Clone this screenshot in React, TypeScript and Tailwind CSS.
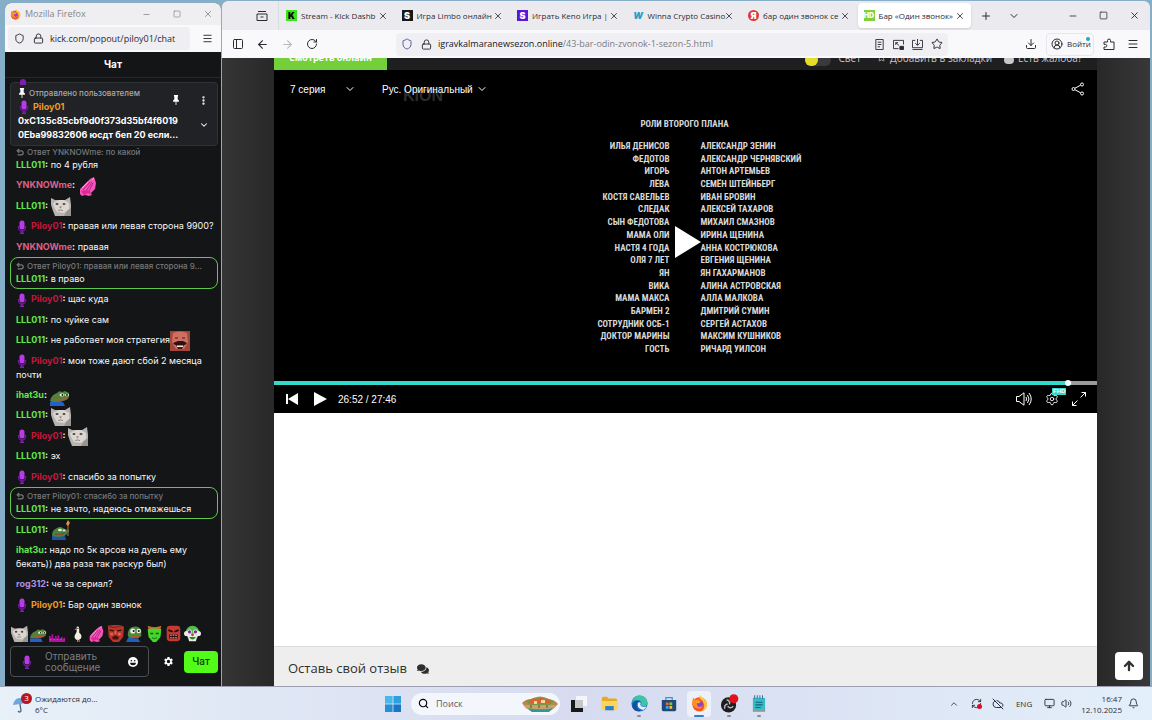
import type { ReactNode } from "react";
import {
  ArrowLeft,
  ArrowRight,
  ArrowUp,
  Bell,
  ChevronDown,
  ChevronUp,
  CircleUserRound,
  CloudOff,
  Download,
  EllipsisVertical,
  Lock,
  Menu,
  Minus,
  Monitor,
  PanelLeft,
  Plus,
  RefreshCw,
  RotateCw,
  Search,
  Settings,
  Shield,
  Square,
  Star,
  Volume2,
  X,
} from "lucide-react";
import { FaComments } from "react-icons/fa";
import { MdSettings } from "react-icons/md";

/* ---------- Emotes ---------- */

function Mic({ className = "h-3.5 w-3" }: { className?: string }) {
  return (
    <svg viewBox="0 0 12 14" className={className}>
      <path d="M2.500 6v1.500a3.500 3.500 0 0 0 7 0V6" fill="none" stroke="#6a1a99" strokeWidth="1.400" />
      <rect x="3.500" y="0.500" width="5" height="9" rx="2.500" fill="#b93be6" />
      <path d="M6 11v2M4 13.200h4" stroke="#7d22ac" strokeWidth="1.400" />
    </svg>
  );
}

function Cat() {
  return (
    <svg viewBox="0 0 20 20" className="h-full w-full">
      <path d="M0 2l4 2h10l5-3 1 8v11H4L2 15 0 9z" fill="#b9b3af" />
      <path d="M2 7l6-3h5l5 3v6l-5 4-7-1-3-5z" fill="#dbd6d2" />
      <ellipse cx="6" cy="8" rx="1.500" ry="1.100" fill="#4b4644" />
      <ellipse cx="13" cy="8" rx="1.500" ry="1.100" fill="#4b4644" />
      <path d="M8 10.500h3l-1.500 2z" fill="#93787a" />
      <path d="M7 14.500q2.500-1 5 0" stroke="#8f8682" fill="none" />
      <path d="M13 20l3-5 4-3v8z" fill="#9a9490" />
    </svg>
  );
}

function Hands() {
  return (
    <svg viewBox="0 0 20 20" className="h-full w-full">
      <path d="M2 13L9 6l3-3 4-2 1 3 1 3-1 6-4 4 1 2-3 1-4-1-3 1-2-2z" fill="#f455b8" />
      <path d="M5 14l7-8M8 15l6-9M11 15l4-8" stroke="#b81f80" strokeWidth="1" />
      <path d="M3 15l3 4 4-2 3 2-1-4-4-1z" fill="#d92b93" />
      <path d="M4 12l6-6M14 4l2-2" stroke="#ffa6dd" />
    </svg>
  );
}

function Pepe() {
  return (
    <svg viewBox="0 0 20 20" className="h-full w-full">
      <path d="M0 15q1-6 7-8 2-3 5-1l3-1 4 2v4l-3 3-6 2H2z" fill="#52813a" />
      <ellipse cx="12" cy="9" rx="2.500" ry="1.400" fill="#e8efe0" />
      <ellipse cx="17" cy="9" rx="2" ry="1.300" fill="#e8efe0" />
      <circle cx="12.500" cy="9" r="0.900" fill="#111" />
      <circle cx="17" cy="9" r="0.900" fill="#111" />
      <path d="M5 13q7 2 13-1" stroke="#a85a32" strokeWidth="1.800" fill="none" />
      <path d="M0 16h13l2 4H0z" fill="#2460c9" />
    </svg>
  );
}

function PepeTorch() {
  return (
    <svg viewBox="0 0 20 20" className="h-full w-full">
      <path d="M1 15q0-5 5-7 3-2 6 0l4 2v4l-4 3H2z" fill="#4c8040" />
      <ellipse cx="9" cy="10" rx="2" ry="1.200" fill="#e3ecdc" />
      <ellipse cx="13" cy="10.500" rx="1.500" ry="1" fill="#e3ecdc" />
      <path d="M4 14q5 1 10-1" stroke="#8a4a2e" strokeWidth="1.500" fill="none" />
      <path d="M1 16l6 1 7-1 1 4H1z" fill="#1f56a8" />
      <path d="M17 4v12" stroke="#8a5a33" strokeWidth="1.400" />
      <path d="M17 0l2 3-2 3-2-2z" fill="#f08a3a" />
      <circle cx="16.500" cy="11" r="1.600" fill="#4c8040" />
    </svg>
  );
}

function Laugh() {
  return (
    <svg viewBox="0 0 20 20" className="h-full w-full">
      <rect width="20" height="20" fill="#a3473c" />
      <path d="M3 2q7-3 14 0l1 9-4 7H6l-4-7z" fill="#cf6f62" />
      <path d="M5 7h3M12 7h3" stroke="#4a1a15" strokeWidth="1.200" />
      <path d="M3 12l5-2h5l4 2-2 2H5z" fill="#2e1210" />
      <path d="M6 14h8l-2 4H8z" fill="#4a1414" />
      <path d="M7 14.500h6V16H7z" fill="#f1e6e0" />
    </svg>
  );
}

function Crowd() {
  return (
    <svg viewBox="0 0 20 20" className="h-full w-full">
      <path
        d="M0 20v-7h2v2h1v-4h2v5h2v-3h2v3h1v-4h2v4h2v-2h2v3h1v-2h2v5z"
        fill="#b0129f"
      />
      <path d="M1 17h17" stroke="#e03bd0" strokeDasharray="2 2" />
    </svg>
  );
}

function Duck() {
  return (
    <svg viewBox="0 0 20 20" className="h-full w-full">
      <path d="M9 2q3-1 3 2v5q4 3 2 7l-3 2-3-1q-3-3 0-7l1-2z" fill="#f2f0e4" />
      <path d="M9 4L6 5l3 1z" fill="#e89a2a" />
      <circle cx="10.500" cy="4" r="0.700" fill="#111" />
      <path d="M10 17v3M12 17v3" stroke="#e89a2a" />
    </svg>
  );
}

function RedFace() {
  return (
    <svg viewBox="0 0 20 20" className="h-full w-full">
      <path d="M1 1l6-1h8l5 2-1 12-5 6H7l-5-6z" fill="#b8352a" />
      <path d="M3 6l5 1M12 7l5-1" stroke="#3b0d0a" strokeWidth="1.500" />
      <path d="M9 7h2v4H9zM4 9h3v3H4zM13 9h3v3h-3z" fill="#d96a58" />
      <path d="M6 14l4-2 4 2-1 3H7z" fill="#4a120d" />
      <path d="M1 1l7 2 9-2" stroke="#8a251c" strokeWidth="1.500" fill="none" />
    </svg>
  );
}

function PepeSuit() {
  return (
    <svg viewBox="0 0 20 20" className="h-full w-full">
      <path d="M2 12q0-9 7-10 7-1 9 5v6l-4 3H4z" fill="#4f8a3c" />
      <circle cx="8" cy="7" r="3" fill="#f0f0e8" />
      <circle cx="15" cy="7" r="2.600" fill="#f0f0e8" />
      <circle cx="9" cy="7" r="1.200" fill="#111" />
      <circle cx="15" cy="7" r="1.200" fill="#111" />
      <path d="M6 12h10v2H7z" fill="#b5532f" />
      <path d="M0 20l3-6 5 2h6l3 4z" fill="#1f5fc0" />
    </svg>
  );
}

function Green() {
  return (
    <svg viewBox="0 0 20 20" className="h-full w-full">
      <path d="M2 5q8-4 16 0l-1 9-5 6H8l-5-6z" fill="#45d62c" />
      <path d="M2 1q8 3 16 0l-1 4q-7-2-14 0z" fill="#c3712a" />
      <path d="M5 10h3.500M11.500 10H15" stroke="#145c0a" strokeWidth="1.500" />
      <path d="M7 15q3 2 6 0" stroke="#145c0a" fill="none" />
    </svg>
  );
}

function Rage() {
  return (
    <svg viewBox="0 0 20 20" className="h-full w-full">
      <rect x="2" y="1" width="16" height="18" rx="4" fill="#c63a34" />
      <path d="M4 6l5 2M11 8l5-2" stroke="#300" strokeWidth="2" />
      <rect x="5" y="11" width="10" height="5" fill="#2c0808" />
      <path d="M6 12h8M6 15h8" stroke="#f1dcdc" strokeDasharray="2 1" />
    </svg>
  );
}

function Clown() {
  return (
    <svg viewBox="0 0 20 20" className="h-full w-full">
      <circle cx="10" cy="9" r="8" fill="#4fbf48" />
      <circle cx="3" cy="10" r="3" fill="#e9ece6" />
      <circle cx="17" cy="10" r="3" fill="#e9ece6" />
      <path d="M4 12q6-4 12 0l-2 7H6z" fill="#e9ece6" />
      <circle cx="6.500" cy="8" r="2.800" fill="#e9ece6" />
      <circle cx="13.500" cy="8" r="2.800" fill="#e9ece6" />
      <circle cx="6.500" cy="8" r="1.900" fill="#7a2c8e" />
      <circle cx="13.500" cy="8" r="1.900" fill="#7a2c8e" />
      <circle cx="10" cy="11.500" r="1.600" fill="#d8323e" />
      <path d="M6 14q4 6 8 0z" fill="#1e8a2a" />
    </svg>
  );
}

const quickEmotes = [
  { name: "cat", icon: <Cat /> },
  { name: "pepe", icon: <Pepe /> },
  { name: "crowd", icon: <Crowd /> },
  { name: "duck", icon: <Duck /> },
  { name: "hands", icon: <Hands /> },
  { name: "redface", icon: <RedFace /> },
  { name: "suit", icon: <PepeSuit /> },
  { name: "green", icon: <Green /> },
  { name: "rage", icon: <Rage /> },
  { name: "clown", icon: <Clown /> },
];

/* ---------- App logos ---------- */

function FirefoxLogo({ className }: { className: string }) {
  return (
    <svg viewBox="0 0 20 20" className={className}>
      <circle cx="10" cy="11" r="8.500" fill="#f4532e" />
      <path d="M11 0q1 3 5 5 3 3 3 7-1 6-7 7.500 4-3 3.500-8Q14 6 11 5q-2-2 0-5z" fill="#ffc53a" />
      <path d="M3 3l2 3 4-1 1 2-3 2q1 4 4 4l3-1q-1 4-5 4-7-1-7.500-7Q1 6 3 3z" fill="#ff8f22" />
      <circle cx="10.500" cy="10.500" r="3.400" fill="#8a3fe0" />
      <path d="M5 8l4-1 3 1-3 2z" fill="#ffa52e" />
    </svg>
  );
}

function EdgeLogo() {
  return (
    <svg viewBox="0 0 20 20" className="h-[17px] w-[17px]">
      <circle cx="10" cy="10" r="9.500" fill="#1b78c8" />
      <path d="M1 9Q3 1 10 .5q8 0 9.500 8 0 5-6 5-3-1-1-4-1-4-6-3.500-4 .5-5.500 3z" fill="#3ec5a8" />
      <path d="M7 9q-2 7 5 9.500Q5 21 2 15 0 10 5 7q4-1 6 1-3 0-4 1z" fill="#124f9c" />
      <path d="M11.500 9q-2 4 3 5 3 0 4-1-1 3-4 4.500Q7 16 8 10q1-2 3.500-1z" fill="#e8eef8" />
    </svg>
  );
}

function FolderLogo() {
  return (
    <svg viewBox="0 0 20 20" className="h-[17px] w-[17px]">
      <path d="M1 4q0-2 2-2h4l2 2h8q2 0 2 2v11H1z" fill="#e8a92a" />
      <path d="M1 7h18v9q0 2-2 2H3q-2 0-2-2z" fill="#fbd45c" />
      <path d="M5 13h10v5H5z" fill="#2d7fd0" />
    </svg>
  );
}

function StoreLogo() {
  return (
    <svg viewBox="0 0 20 20" className="h-4 w-4">
      <path d="M6 5V2h8v3" fill="none" stroke="#2a9be0" strokeWidth="1.500" />
      <path d="M1 5h18v12q0 2-2 2H3q-2 0-2-2z" fill="#1f4a78" />
      <path d="M6 8h3.500v3.500H6z" fill="#f0603a" />
      <path d="M10.500 8H14v3.500h-3.500z" fill="#86c440" />
      <path d="M6 12.500h3.500V16H6z" fill="#37a8ec" />
      <path d="M10.500 12.500H14V16h-3.500z" fill="#fbc02d" />
    </svg>
  );
}

function ObsLogo() {
  return (
    <svg viewBox="0 0 20 20" className="h-[19px] w-[19px]">
      <circle cx="9" cy="11.500" r="8" fill="#1e1e20" />
      <g fill="none" stroke="#b9b9bd" strokeWidth="1.500">
        <path d="M7 6q4 1 3 5M5 15.500q-1-4 3-5M14 13q-3 3-6-0" />
      </g>
      <circle cx="14.500" cy="5" r="4.800" fill="#e0131c" />
    </svg>
  );
}

function NotepadLogo() {
  return (
    <svg viewBox="0 0 16 20" className="h-4.5 w-3.5">
      <path d="M1 3h14v15H1z" fill="#35bccb" />
      <path d="M3 0v4M6 0v4M9 0v4M12 0v4" stroke="#27647a" />
      <path d="M4 8h8M4 11h8M4 14h6" stroke="#155f70" strokeWidth="1.300" />
      <path d="M1 17h14v2H1z" fill="#9a9a92" />
    </svg>
  );
}

function TaskViewLogo() {
  return (
    <svg viewBox="0 0 16 16" className="h-4 w-4">
      <path d="M5 0h11v10H5z" fill="#f5f6fa" />
      <path d="M0 4h12v12H0z" fill="#17181a" />
      <path d="M4 4h8v8H4z" fill="#c4c6ca" />
    </svg>
  );
}

function WindowsLogo() {
  return (
    <svg viewBox="0 0 16 16" className="h-4 w-4">
      <path d="M0 0h7.600v7.600H0z" fill="#4ab8e8" />
      <path d="M8.400 0H16v7.600H8.400z" fill="#2f9fe0" />
      <path d="M0 8.400h7.600V16H0z" fill="#2590d8" />
      <path d="M8.400 8.400H16V16H8.400z" fill="#1878c8" />
    </svg>
  );
}

function BoatArt() {
  return (
    <svg viewBox="0 0 36 16" className="h-4 w-9">
      <path d="M0 7q4-4 9-4 9-5 18 0 6 1 9 5l-5 5-5 3H10l-6-4z" fill="#b8874e" />
      <path d="M4 5q14-6 28 0l-4 4H8z" fill="#6f9a48" />
      <path d="M8 4l4-2 3 2 4-3 4 3 4-1 2 4H7z" fill="#d8632f" />
      <path d="M12 5h3v3h-3zM19 4h4v3h-4z" fill="#f0d9a0" />
      <path d="M1 9h34l-4 4H5z" fill="#caa068" />
      <path d="M6 12q12 3 25 0l-4 4H10z" fill="#2c9a9a" />
      <path d="M9 9v3M17 9v3M25 9v3" stroke="#6a4a2a" />
    </svg>
  );
}

function PuzzleIcon() {
  return (
    <svg viewBox="0 0 12 12" className="h-3 w-3" fill="none" stroke="currentColor">
      <path d="M1 4h3.500V2.500a1.500 1.500 0 0 1 3 0V4H11v7.500H1V9h1.500a1.300 1.300 0 0 0 0-2.600H1z" />
    </svg>
  );
}

/* ---------- Chat window ---------- */

type Message = {
  user: string;
  color: string;
  text?: string;
  mod?: boolean;
  reply?: string;
  boxed?: boolean;
  emote?: ReactNode;
};

const green = "text-[#62e84a]";
const pink = "text-[#dd6189]";
const crimson = "text-[#c4153f]";

const messages: Message[] = [
  { user: "LLL011", color: green, text: "по 4 рубля", reply: "Ответ YNKNOWme: по какой" },
  { user: "YNKNOWme", color: pink, emote: <Hands /> },
  { user: "LLL011", color: green, emote: <Cat /> },
  { user: "Piloy01", color: crimson, mod: true, text: "правая или левая сторона 9900?" },
  { user: "YNKNOWme", color: pink, text: "правая" },
  {
    user: "LLL011",
    color: green,
    text: "в право",
    reply: "Ответ Piloy01: правая или левая сторона 9...",
    boxed: true,
  },
  { user: "Piloy01", color: crimson, mod: true, text: "щас куда" },
  { user: "LLL011", color: green, text: "по чуйке сам" },
  { user: "LLL011", color: green, text: "не работает моя стратегия", emote: <Laugh /> },
  { user: "Piloy01", color: crimson, mod: true, text: "мои тоже дают сбой 2 месяца почти" },
  { user: "ihat3u", color: green, emote: <Pepe /> },
  { user: "LLL011", color: green, emote: <Cat /> },
  { user: "Piloy01", color: crimson, mod: true, emote: <Cat /> },
  { user: "LLL011", color: green, text: "эх" },
  { user: "Piloy01", color: crimson, mod: true, text: "спасибо за попытку" },
  {
    user: "LLL011",
    color: green,
    text: "не зачто, надеюсь отмажешься",
    reply: "Ответ Piloy01: спасибо за попытку",
    boxed: true,
  },
  { user: "LLL011", color: green, emote: <PepeTorch /> },
  {
    user: "ihat3u",
    color: green,
    text: "надо по 5к арсов на дуель ему бекать)) два раза так раскур был)",
  },
  { user: "rog312", color: "text-[#b48fdc]", text: "че за сериал?" },
  { user: "Piloy01", color: "text-[#f09a1e]", mod: true, text: "Бар один звонок" },
];

function ReplyIcon() {
  return (
    <svg viewBox="0 0 10 10" className="h-2 w-2 shrink-0" fill="none" stroke="currentColor" strokeWidth="1.500">
      <path d="M4 1L1.500 3.500 4 6M2 3.500h4.500a2.500 2.500 0 0 1 0 5H2" />
    </svg>
  );
}

function PinIcon({ className }: { className: string }) {
  return (
    <svg viewBox="0 0 8 12" className={className} fill="currentColor">
      <path d="M1.500 0h5v1.500L6 2v3l1.500 1.500V8h-3v4h-1V8h-3V6.500L2 5V2l-.5-.5z" />
    </svg>
  );
}

function ChatMessage({ user, color, text, mod, reply, boxed, emote }: Message) {
  return (
    <li
      className={
        boxed
          ? "-my-[3px] rounded-lg border border-[#5fc94b] px-[5px] py-0.5"
          : "pl-1.5"
      }
    >
      {reply && (
        <div className="flex items-center gap-[3px] text-[8px] leading-3 font-medium text-[#77787a]">
          <ReplyIcon />
          <span className="truncate">{reply}</span>
        </div>
      )}
      <p className="leading-[14px] text-[#f8f8f8]">
        {mod && <Mic className="-my-1 mr-[3px] inline-block h-3.5 w-3 align-middle" />}
        <span className={`font-bold ${color}`}>{user}</span>
        <span className="font-bold">:</span> {text}
        {emote && <span className="-my-2 inline-block h-5 w-5 align-middle">{emote}</span>}
      </p>
    </li>
  );
}

function ChatWindow() {
  return (
    <section className="mt-[3px] ml-[5px] flex w-[216px] shrink-0 flex-col overflow-hidden rounded-t-md bg-[#131517] font-[Inter,sans-serif] text-[9px] text-white">
      <div className="flex h-[22px] items-center bg-[#efeff2] pr-2 pl-[5px] font-['Open_Sans',sans-serif] text-[#85868a]">
        <FirefoxLogo className="mr-1 h-[11px] w-[11px]" />
        <span>Mozilla Firefox</span>
        <div className="ml-auto flex items-center gap-[22px]">
          <button aria-label="Свернуть"><Minus size={9} strokeWidth={2} /></button>
          <button aria-label="Развернуть"><Square size={8} strokeWidth={2} /></button>
          <button aria-label="Закрыть"><X size={10} strokeWidth={2} /></button>
        </div>
      </div>
      <div className="flex h-[27px] items-center bg-[#f9f9fb] pr-2 pl-[3px] font-['Open_Sans',sans-serif] text-[#2a2a30]">
        <div className="flex h-[23px] w-[182px] items-center rounded bg-[#efeff3] px-1.5">
          <Shield size={11} strokeWidth={2} className="mr-2" />
          <Lock size={11} strokeWidth={2} className="mr-1.5" />
          <span>kick.com/popout/piloy01/chat</span>
        </div>
        <button aria-label="Меню" className="ml-auto"><Menu size={11} strokeWidth={2} /></button>
      </div>

      <h1 className="flex h-[26px] items-center justify-center border-b border-[#26282b] text-[10px] font-bold">
        Чат
      </h1>

      {/* Pinned message */}
      <div className="relative mr-[3px] ml-[5px] mt-1 h-16 rounded border border-[#303336] bg-[#202225] pt-[3px] pr-2 pl-[7px]">
        <span className="absolute -top-1 left-[9px] h-1.5 w-1.5 rounded-t-full bg-[#7d1fb0]" />
        <div className="flex items-center">
          <div className="flex-1">
            <p className="flex items-center gap-[3px] text-[8px] leading-[14px] font-medium text-[#a9aaac]">
              <PinIcon className="h-2.5 w-2 text-white" />
              Отправлено пользователем
            </p>
            <p className="flex items-center gap-[3px] leading-[14px] font-bold text-[#f09a1e]">
              <Mic />
              Piloy01
            </p>
          </div>
          <button aria-label="Закрепить"><PinIcon className="h-2.5 w-2" /></button>
          <button aria-label="Ещё" className="ml-[18px]"><EllipsisVertical size={11} strokeWidth={3} /></button>
        </div>
        <div className="flex items-start">
          <p className="flex-1 leading-[14px] font-bold">
            0xC135c85cbf9d0f373d35bf4f6019 0Eba99832606 юсдт беп 20 если...
          </p>
          <button aria-label="Показать всё" className="mt-1.5"><ChevronDown size={10} strokeWidth={2.5} /></button>
        </div>
      </div>

      <ul className="mr-[3px] ml-[5px] flex flex-1 flex-col justify-between pb-[13px]">
        {messages.map((message, i) => (
          <ChatMessage key={i} {...message} />
        ))}
      </ul>

      <div className="flex justify-between pr-5 pl-1.5">
        {quickEmotes.map((emote) => (
          <button key={emote.name} aria-label={emote.name} className="h-[17px] w-[17px]">
            {emote.icon}
          </button>
        ))}
      </div>

      <form className="mr-[3px] ml-[5px] mt-1 mb-[9px] flex items-center">
        <div className="flex h-[31px] w-[139px] items-center rounded border border-[#4b4e52] px-2.5">
          <Mic className="h-4 w-3" />
          <textarea
            aria-label="Отправить сообщение"
            placeholder="Отправить сообщение"
            rows={2}
            className="ml-3 h-[22px] w-0 flex-1 resize-none overflow-hidden text-[10px] leading-[11px] placeholder:text-[#7d7f82]"
          />
          <button type="button" aria-label="Эмоции">
            <svg viewBox="0 0 12 12" className="h-2.5 w-2.5">
              <circle cx="6" cy="6" r="6" fill="#fff" />
              <circle cx="4" cy="4.500" r="1" fill="#131517" />
              <circle cx="8" cy="4.500" r="1" fill="#131517" />
              <path d="M2.500 7h7a3.500 3 0 0 1-7 0z" fill="#131517" />
            </svg>
          </button>
        </div>
        <button type="button" aria-label="Настройки" className="mr-auto ml-[14px]">
          <MdSettings size={11} />
        </button>
        <button type="button" className="h-[22px] w-[34px] rounded bg-[#53fc18] text-[10px] font-medium text-[#10300a]">
          Чат
        </button>
      </form>
    </section>
  );
}

/* ---------- Browser window ---------- */

const tabs = [
  {
    title: "Stream - Kick Dashb",
    icon: <span className="bg-[#3be41f] text-black">K</span>,
  },
  {
    title: "Игра Limbo онлайн",
    icon: <span className="bg-[#17181c] text-white">S</span>,
  },
  {
    title: "Играть Keno Игра |",
    icon: <span className="bg-[#5a17d6] text-white">S</span>,
  },
  {
    title: "Winna Crypto Casino",
    icon: <span className="text-[#2a9fc4] italic">W</span>,
  },
  {
    title: "бар один звонок се",
    icon: <span className="rounded-full bg-[#e3343b] text-white">Я</span>,
  },
  {
    title: "Бар «Один звонок»",
    icon: <span className="bg-[#7ed03c] text-[7px] leading-[11px] text-white">HD</span>,
    active: true,
  },
];

function TabBar() {
  return (
    <div className="flex h-[29px] items-center bg-[#ebebef] text-[#2b2a33]">
      <button aria-label="Недавние" className="mr-[10px] ml-[34px]">
        <svg viewBox="0 0 12 12" className="h-3 w-3" fill="none" stroke="currentColor">
          <path d="M2 1.500h8M1 4h10v6.500H1zM4.500 7h3" />
        </svg>
      </button>
      <div className="h-full w-px bg-[#dcdce0]" />
      <div role="tablist" className="flex min-w-0 flex-[0_1_693px]">
        {tabs.map((tab) => (
          <div
            key={tab.title}
            role="tab"
            aria-selected={!!tab.active}
            className={`mx-px flex h-[25px] min-w-0 flex-1 items-center rounded px-1.5 ${
              tab.active ? "bg-white shadow-sm" : ""
            }`}
          >
            <span className="mr-1 flex h-[11px] w-[11px] shrink-0 font-[Inter,sans-serif] text-[9px] leading-[11px] font-black [&>span]:w-full [&>span]:text-center">
              {tab.icon}
            </span>
            <span className="min-w-0 flex-1 text-[8px] whitespace-nowrap">{tab.title}</span>
            <button aria-label="Закрыть вкладку"><X size={10} strokeWidth={2} /></button>
          </div>
        ))}
      </div>
      <button aria-label="Новая вкладка" className="ml-2"><Plus size={12} strokeWidth={2} /></button>
      <button aria-label="Список вкладок" className="ml-4"><ChevronDown size={12} strokeWidth={2} /></button>
      <div className="mr-2.5 ml-auto flex items-center gap-[21px]">
        <button aria-label="Свернуть"><Minus size={10} strokeWidth={2} /></button>
        <button aria-label="Развернуть"><Square size={9} strokeWidth={2} /></button>
        <button aria-label="Закрыть"><X size={11} strokeWidth={2} /></button>
      </div>
    </div>
  );
}

function NavBar() {
  return (
    <div className="flex h-7 items-center bg-[#f9f9fb] text-[#2b2a33]">
      <div className="ml-2.5 flex w-[164px] items-center gap-3">
        <button aria-label="Боковая панель"><PanelLeft size={12} strokeWidth={2} /></button>
        <button aria-label="Назад"><ArrowLeft size={13} strokeWidth={2} /></button>
        <button aria-label="Вперёд" className="text-[#b9b9be]"><ArrowRight size={13} strokeWidth={2} /></button>
        <button aria-label="Обновить"><RotateCw size={12} strokeWidth={2} /></button>
      </div>
      <div className="flex h-[23px] min-w-0 flex-[0_1_552px] items-center rounded bg-[#f0f0f4] px-[5px]">
        <Shield size={12} strokeWidth={2} className="mr-2 text-[#5b5b9a]" />
        <Lock size={11} strokeWidth={2} className="mr-1.5" />
        <span className="text-[9px] whitespace-nowrap text-[#7b7b82]">
          <span className="text-[#15141a]">igravkalmaranewsezon.online</span>
          /43-bar-odin-zvonok-1-sezon-5.html
        </span>
        <div className="ml-auto flex items-center gap-2">
          <svg viewBox="0 0 12 12" className="h-[11px] w-[11px]" fill="none" stroke="currentColor">
            <path d="M2 .5h8v11H2zM4 3.500h4M4 6h4M4 8.500h2.500" />
          </svg>
          <svg viewBox="0 0 12 12" className="h-[11px] w-[11px]" fill="none" stroke="currentColor">
            <path d="M6 10.500H.5v-9h11V6M3 4l3.500 3M3 6.500V4h2.500" />
            <path d="M7.500 8h4v3.500h-4z" fill="currentColor" />
          </svg>
          <svg viewBox="0 0 12 12" className="h-[11px] w-[11px]" fill="none" stroke="currentColor">
            <path d="M3.500 1.500h-3v8h11v-8h-3M6 0v6.500M3.500 4.500L6 7l2.500-2.500M.5 11.500h11" />
          </svg>
          <Star size={12} strokeWidth={2} />
        </div>
      </div>
      <button aria-label="Загрузки" className="ml-auto"><Download size={12} strokeWidth={2} /></button>
      <button className="relative ml-[9px] flex h-[23px] w-12 items-center gap-1 rounded-sm border border-[#e6e6ec] px-1 text-[8px]">
        <CircleUserRound size={12} strokeWidth={2} className="shrink-0" />
        Войти
        <span className="absolute top-[3px] right-[3px] h-1 w-1 rounded-full bg-[#1fa8c8]" />
      </button>
      <button aria-label="Расширения" className="ml-[9px]"><PuzzleIcon /></button>
      <button aria-label="Меню" className="mr-[11px] ml-3"><Menu size={12} strokeWidth={2} /></button>
    </div>
  );
}

const cast = [
  ["Илья Денисов", "Александр Зенин"],
  ["Федотов", "Александр Чернявский"],
  ["Игорь", "Антон Артемьев"],
  ["Лёва", "Семён Штейнберг"],
  ["Костя Савельев", "Иван Бровин"],
  ["Следак", "Алексей Тахаров"],
  ["Сын Федотова", "Михаил Смазнов"],
  ["Мама Оли", "Ирина Щенина"],
  ["Настя 4 года", "Анна Кострюкова"],
  ["Оля 7 лет", "Евгения Щенина"],
  ["Ян", "Ян Гахарманов"],
  ["Вика", "Алина Астровская"],
  ["Мама Макса", "Алла Малкова"],
  ["Бармен 2", "Дмитрий Сумин"],
  ["Сотрудник ОСБ-1", "Сергей Астахов"],
  ["Доктор Марины", "Максим Кушников"],
  ["Гость", "Ричард Уилсон"],
];

function Player() {
  return (
    <div className="bg-black font-['Liberation_Sans',sans-serif] text-[10px] text-white">
      <div className="relative flex h-[38px] items-center px-4">
        <span className="absolute top-5 left-[129px] text-[16px] leading-3 font-bold text-[#2c2c2e]">
          KION
        </span>
        <button className="relative flex w-[66px] items-center justify-between">
          7 серия <ChevronDown size={12} strokeWidth={2} />
        </button>
        <button className="relative ml-[26px] flex items-center gap-[3px]">
          Рус. Оригинальный <ChevronDown size={12} strokeWidth={2} />
        </button>
        <button aria-label="Поделиться" className="-mr-1 ml-auto">
          <svg viewBox="0 0 14 14" className="h-3.5 w-3.5" fill="none" stroke="currentColor">
            <circle cx="2.500" cy="7" r="1.500" />
            <circle cx="11" cy="2.500" r="1.500" />
            <circle cx="11" cy="11.500" r="1.500" />
            <path d="M4 6.200l5.600-3M4 7.800l5.600 3" />
          </svg>
        </button>
      </div>

      {/* Picture area with the closing credits */}
      <div className="relative pt-2.5 pb-[26px] font-['Roboto_Condensed','Liberation_Sans_Narrow','DejaVu_Sans_Condensed',sans-serif] text-[9px] leading-3 font-bold text-[#d8d8d8] uppercase">
        <p className="pr-0.5 text-center">Роли второго плана</p>
        <dl className="mt-2.5 flex h-[215px] flex-col justify-between pr-px">
          {cast.map(([role, actor]) => (
            <div key={role} className="grid grid-cols-2 gap-x-[31px]">
              <dt className="text-right">{role}</dt>
              <dd>{actor}</dd>
            </div>
          ))}
        </dl>
        <button
          aria-label="Смотреть"
          className="absolute top-[118px] left-1/2 -ml-[11px] text-white"
        >
          <svg viewBox="0 0 26 32" className="h-8 w-[26px]" fill="currentColor">
            <path d="M0 0l26 16L0 32z" />
          </svg>
        </button>
      </div>

      <input
        type="range"
        aria-label="Перемотка"
        min={0}
        max={1666}
        defaultValue={1612}
        className="block h-1 w-full appearance-none bg-linear-to-r from-[#35d8cc] from-[97%] to-[#9b9b9f] to-[97%] [&::-webkit-slider-thumb]:h-1.5 [&::-webkit-slider-thumb]:w-1.5 [&::-webkit-slider-thumb]:appearance-none [&::-webkit-slider-thumb]:rounded-full [&::-webkit-slider-thumb]:bg-white"
      />

      <div className="flex h-7 items-center px-3">
        <button aria-label="Предыдущая серия">
          <svg viewBox="0 0 12 12" className="h-3 w-3" fill="currentColor">
            <path d="M0 1h2v10H0zM12 0v12L2 6z" />
          </svg>
        </button>
        <button aria-label="Воспроизвести" className="ml-4">
          <svg viewBox="0 0 13 14" className="h-3.5 w-[13px]" fill="currentColor">
            <path d="M0 0l13 7-13 7z" />
          </svg>
        </button>
        <span className="ml-[11px]">26:52 / 27:46</span>
        <div className="-mr-px ml-auto flex items-center gap-[13px]">
          <button aria-label="Громкость">
            <svg viewBox="0 0 16 14" className="h-3.5 w-4" fill="none" stroke="currentColor">
              <path d="M.5 4.500H3L8 .8v12.400L3 9.500H.5zM10 5q1 2 0 4M11.500 3q3 4 0 8M13 1q4.500 6 0 12" />
            </svg>
          </button>
          <button aria-label="Настройки" className="relative">
            <Settings size={14} strokeWidth={1.5} />
            <span className="absolute -top-1 left-[7px] bg-[#35d8cc] px-px text-[6px] leading-[7px] font-bold text-white">
              FHD
            </span>
          </button>
          <button aria-label="На весь экран">
            <svg viewBox="0 0 14 14" className="h-3.5 w-3.5" fill="none" stroke="currentColor">
              <path d="M8.500 5.500l5-5M9.500.5h4v4M5.500 8.500l-5 5M.5 9.500v4h4" />
            </svg>
          </button>
        </div>
      </div>
    </div>
  );
}

function Page() {
  return (
    <main className="relative flex flex-1 bg-[linear-gradient(90deg,#353535,#272727_6%,#272727_94%,#383838)] pr-[53px] pl-[52px]">
      <div className="flex min-w-0 flex-1 flex-col bg-white">
        <div className="flex h-3 items-end overflow-hidden bg-[#1f1f21] pr-[15px] text-[10px] leading-4 text-[#c8c8c8]">
          <a href="#player" className="h-7 w-[113px] bg-[#73cf3a] pt-2 text-center text-[9px] font-bold text-white">
            Смотреть онлайн
          </a>
          <label className="ml-auto flex items-end gap-2 pb-1">
            <input type="checkbox" defaultChecked className="peer sr-only" />
            <span className="flex h-3 w-[26px] rounded-full bg-[#3a3a3c]">
              <span className="h-3 w-[13px] rounded-full bg-[#e6dc2a]" />
            </span>
            Свет
          </label>
          <a href="#bookmarks" className="ml-4 flex items-end gap-1 pb-1">
            <Star size={9} strokeWidth={2} className="mb-1" />
            Добавить в закладки
          </a>
          <a href="#report" className="ml-3 flex items-end gap-1 pb-1">
            <span className="mb-0.5 h-2 w-2.5 rounded-sm bg-[#c8c8c8]" />
            Есть жалоба?
          </a>
        </div>
        <Player />
        <div className="flex-1" />
        <h2 className="flex h-10 items-center gap-2.5 border-t border-[#dcdcdc] bg-[#eeeeee] px-3.5 pt-1 text-[13px] font-medium text-[#2e2e2e]">
          Оставь свой отзыв <FaComments size={12} />
        </h2>
      </div>
      <button
        aria-label="Наверх"
        className="absolute right-[7px] bottom-1.5 flex h-7 w-7 items-center justify-center rounded-sm bg-white text-[#333]"
      >
        <ArrowUp size={14} strokeWidth={4} />
      </button>
    </main>
  );
}

function BrowserWindow() {
  return (
    <section className="mt-px mr-0.5 ml-px flex min-w-0 flex-1 flex-col overflow-hidden rounded-t-md">
      <TabBar />
      <NavBar />
      <Page />
    </section>
  );
}

/* ---------- Taskbar ---------- */

const pinnedApps = [
  { name: "Представление задач", icon: <TaskViewLogo /> },
  { name: "Проводник", icon: <FolderLogo /> },
  { name: "Edge", icon: <EdgeLogo />, running: true },
  { name: "Store", icon: <StoreLogo /> },
  { name: "Firefox", icon: <FirefoxLogo className="h-[17px] w-[17px]" />, active: true },
  { name: "OBS", icon: <ObsLogo />, running: true },
  { name: "Блокнот", icon: <NotepadLogo />, running: true },
];

function Taskbar() {
  return (
    <footer className="grid h-[34px] grid-cols-[1fr_auto_1fr] items-center border-t border-[#9c9fb0] bg-linear-to-r from-[#e8f1f9] via-[#d6dbef] to-[#e3effa] text-[8px] text-[#2c2e36]">
      <div className="flex items-center gap-1.5 pl-3">
        <div className="relative h-5 w-[17px]">
          <svg viewBox="0 0 17 20" className="h-5 w-[17px]">
            <path d="M1 11q1-6 6-7 6 0 7 5l-6 1z" fill="#6fa6dc" />
            <path d="M8 10l1 7q-1 2-3 0" fill="none" stroke="#4a6688" strokeWidth="1.300" />
          </svg>
          <span className="absolute -top-px right-[-3px] flex h-[11px] w-[11px] items-center justify-center rounded-full bg-[#b9151c] text-white">
            3
          </span>
        </div>
        <p className="leading-[11px]">
          Ожидаются до...
          <br />
          6°C
        </p>
      </div>

      <div className="flex items-center pl-[7px]">
        <button aria-label="Пуск"><WindowsLogo /></button>
        <label className="mr-1 ml-2.5 flex h-[22px] w-[149px] items-center rounded-full bg-[#f3f6fd] pr-0.5 pl-[7px]">
          <Search size={11} strokeWidth={2.5} className="shrink-0 text-black" />
          <input
            type="search"
            placeholder="Поиск"
            aria-label="Поиск"
            className="ml-[7px] w-0 flex-1 text-[9px] placeholder:text-[#5c5e68]"
          />
          <BoatArt />
        </label>
        {pinnedApps.map((app) => (
          <button
            key={app.name}
            aria-label={app.name}
            className={`relative mx-[3px] flex h-[26px] w-6 items-center justify-center rounded ${
              app.active ? "bg-[#eef1fa]" : ""
            }`}
          >
            {app.icon}
            {app.running && <span className="absolute bottom-0 h-0.5 w-1 rounded bg-[#8a8c96]" />}
            {app.active && <span className="absolute bottom-0 h-0.5 w-2.5 rounded bg-[#2f7fc8]" />}
          </button>
        ))}
      </div>

      <div className="flex items-center justify-end pr-[13px]">
        <ChevronUp size={10} strokeWidth={2} />
        <span className="relative ml-3">
          <RefreshCw size={11} strokeWidth={2} />
          <span className="absolute right-0 bottom-0 h-[5px] w-[5px] rounded-full bg-[#d4102c]" />
        </span>
        <CloudOff size={12} strokeWidth={2} className="ml-2.5" />
        <span className="ml-3">ENG</span>
        <Monitor size={11} strokeWidth={2} className="ml-3" />
        <Volume2 size={11} strokeWidth={2} className="ml-1.5" />
        <p className="ml-[9px] text-right leading-[11px]">
          16:47
          <br />
          12.10.2025
        </p>
        <Bell size={11} strokeWidth={2} className="ml-1.5" />
      </div>
    </footer>
  );
}

export default function App() {
  return (
    <div className="flex min-h-screen flex-col bg-[#86aec8] font-['Open_Sans','Noto_Sans',sans-serif]">
      <div className="flex flex-1">
        <ChatWindow />
        <BrowserWindow />
      </div>
      <Taskbar />
    </div>
  );
}
